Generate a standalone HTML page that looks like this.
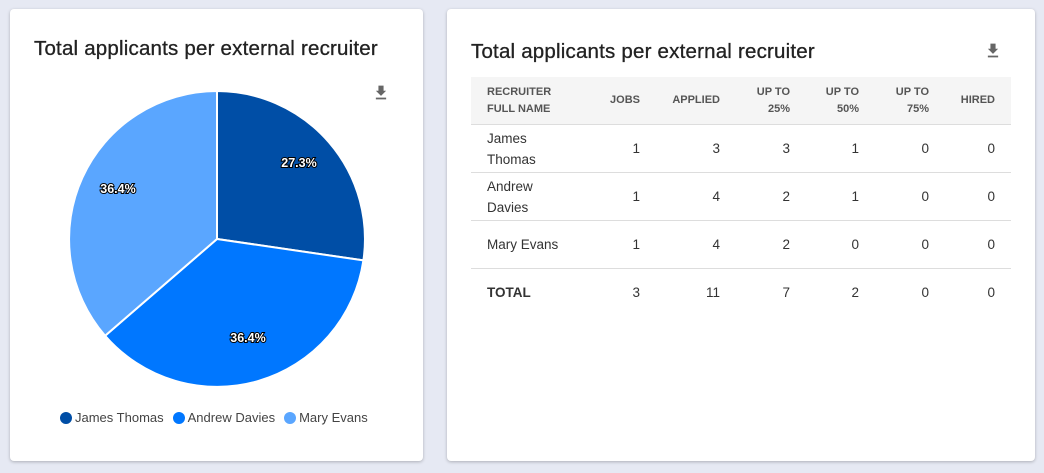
<!DOCTYPE html>
<html><head><meta charset="utf-8"><style>
body{margin:0;width:1044px;height:473px;background:#e6e9f3;font-family:"Liberation Sans",sans-serif;position:relative;overflow:hidden}
.card{position:absolute;background:#fff;border-radius:4px;box-shadow:0 1px 3px rgba(0,0,0,.25)}
h2{position:absolute;margin:0;font-size:20.5px;font-weight:normal;color:#222;letter-spacing:.2px;-webkit-text-stroke:.3px #222}
.dl{position:absolute;width:12px;height:15px}
table{position:absolute;left:24px;top:68px;width:540px;border-collapse:collapse;font-size:13.5px;color:#333;table-layout:fixed}
th{background:#f5f5f5;font-size:11px;color:#555;font-weight:bold;text-align:right;height:47px;line-height:17px;padding:0 16px 0 0;border-bottom:1px solid #ddd}
td{height:47px;text-align:right;padding:0 16px 0 0;border-bottom:1px solid #ddd;line-height:21px}
th:first-child,td:first-child{text-align:left;padding-left:16px}
tr:last-child td{border-bottom:none}
.leg{position:absolute;top:410px;left:60px;font-size:13px;color:#444;display:flex;gap:9px}
.leg span{display:flex;align-items:center}
.leg i{display:inline-block;width:12px;height:12px;border-radius:50%;margin-right:3px}
</style></head><body>
<div class="card" style="left:10px;top:9px;width:413px;height:452px">
<h2 style="left:24px;top:28px">Total applicants per external recruiter</h2>
<svg class="dl" style="left:365px;top:76px" viewBox="0 0 14 16"><path d="M4 0h6v6h3l-6 6-6-6h3z M1 14h12v2H1z" fill="#666"/></svg>
</div>
<svg style="position:absolute;left:0;top:0" width="440" height="473">
<g stroke="#fff" stroke-width="2">
<path d="M217 239 L217 91 A148 148 0 0 1 363.4 260.4Z" fill="#004ea6"/>
<path d="M217 239 L363.4 260.4 A148 148 0 0 1 105.1 335.8Z" fill="#0077ff"/>
<path d="M217 239 L105.1 335.8 A148 148 0 0 1 217 91Z" fill="#5aa6ff"/>
</g>
<g font-size="12.5" font-weight="bold" fill="#fff" stroke="#000" stroke-width="2" paint-order="stroke" text-anchor="middle" font-family="Liberation Sans">
<text x="299" y="167">27.3%</text><text x="248" y="342">36.4%</text><text x="118" y="193">36.4%</text>
</g></svg>
<div class="leg"><span><i style="background:#004ea6"></i>James Thomas</span><span><i style="background:#0077ff"></i>Andrew Davies</span><span><i style="background:#5aa6ff"></i>Mary Evans</span></div>
<div class="card" style="left:447px;top:9px;width:588px;height:452px">
<h2 style="left:24px;top:31px">Total applicants per external recruiter</h2>
<svg class="dl" style="left:540px;top:34px" viewBox="0 0 14 16"><path d="M4 0h6v6h3l-6 6-6-6h3z M1 14h12v2H1z" fill="#666"/></svg>
<table>
<colgroup><col style="width:119px"><col style="width:66px"><col style="width:80px"><col style="width:70px"><col style="width:69px"><col style="width:70px"><col style="width:66px"></colgroup>
<tr><th>RECRUITER<br>FULL NAME</th><th>JOBS</th><th>APPLIED</th><th>UP TO<br>25%</th><th>UP TO<br>50%</th><th>UP TO<br>75%</th><th>HIRED</th></tr>
<tr><td>James<br>Thomas</td><td>1</td><td>3</td><td>3</td><td>1</td><td>0</td><td>0</td></tr>
<tr><td>Andrew<br>Davies</td><td>1</td><td>4</td><td>2</td><td>1</td><td>0</td><td>0</td></tr>
<tr><td>Mary Evans</td><td>1</td><td>4</td><td>2</td><td>0</td><td>0</td><td>0</td></tr>
<tr><td><b>TOTAL</b></td><td>3</td><td>11</td><td>7</td><td>2</td><td>0</td><td>0</td></tr>
</table>
</div>
</body></html>
